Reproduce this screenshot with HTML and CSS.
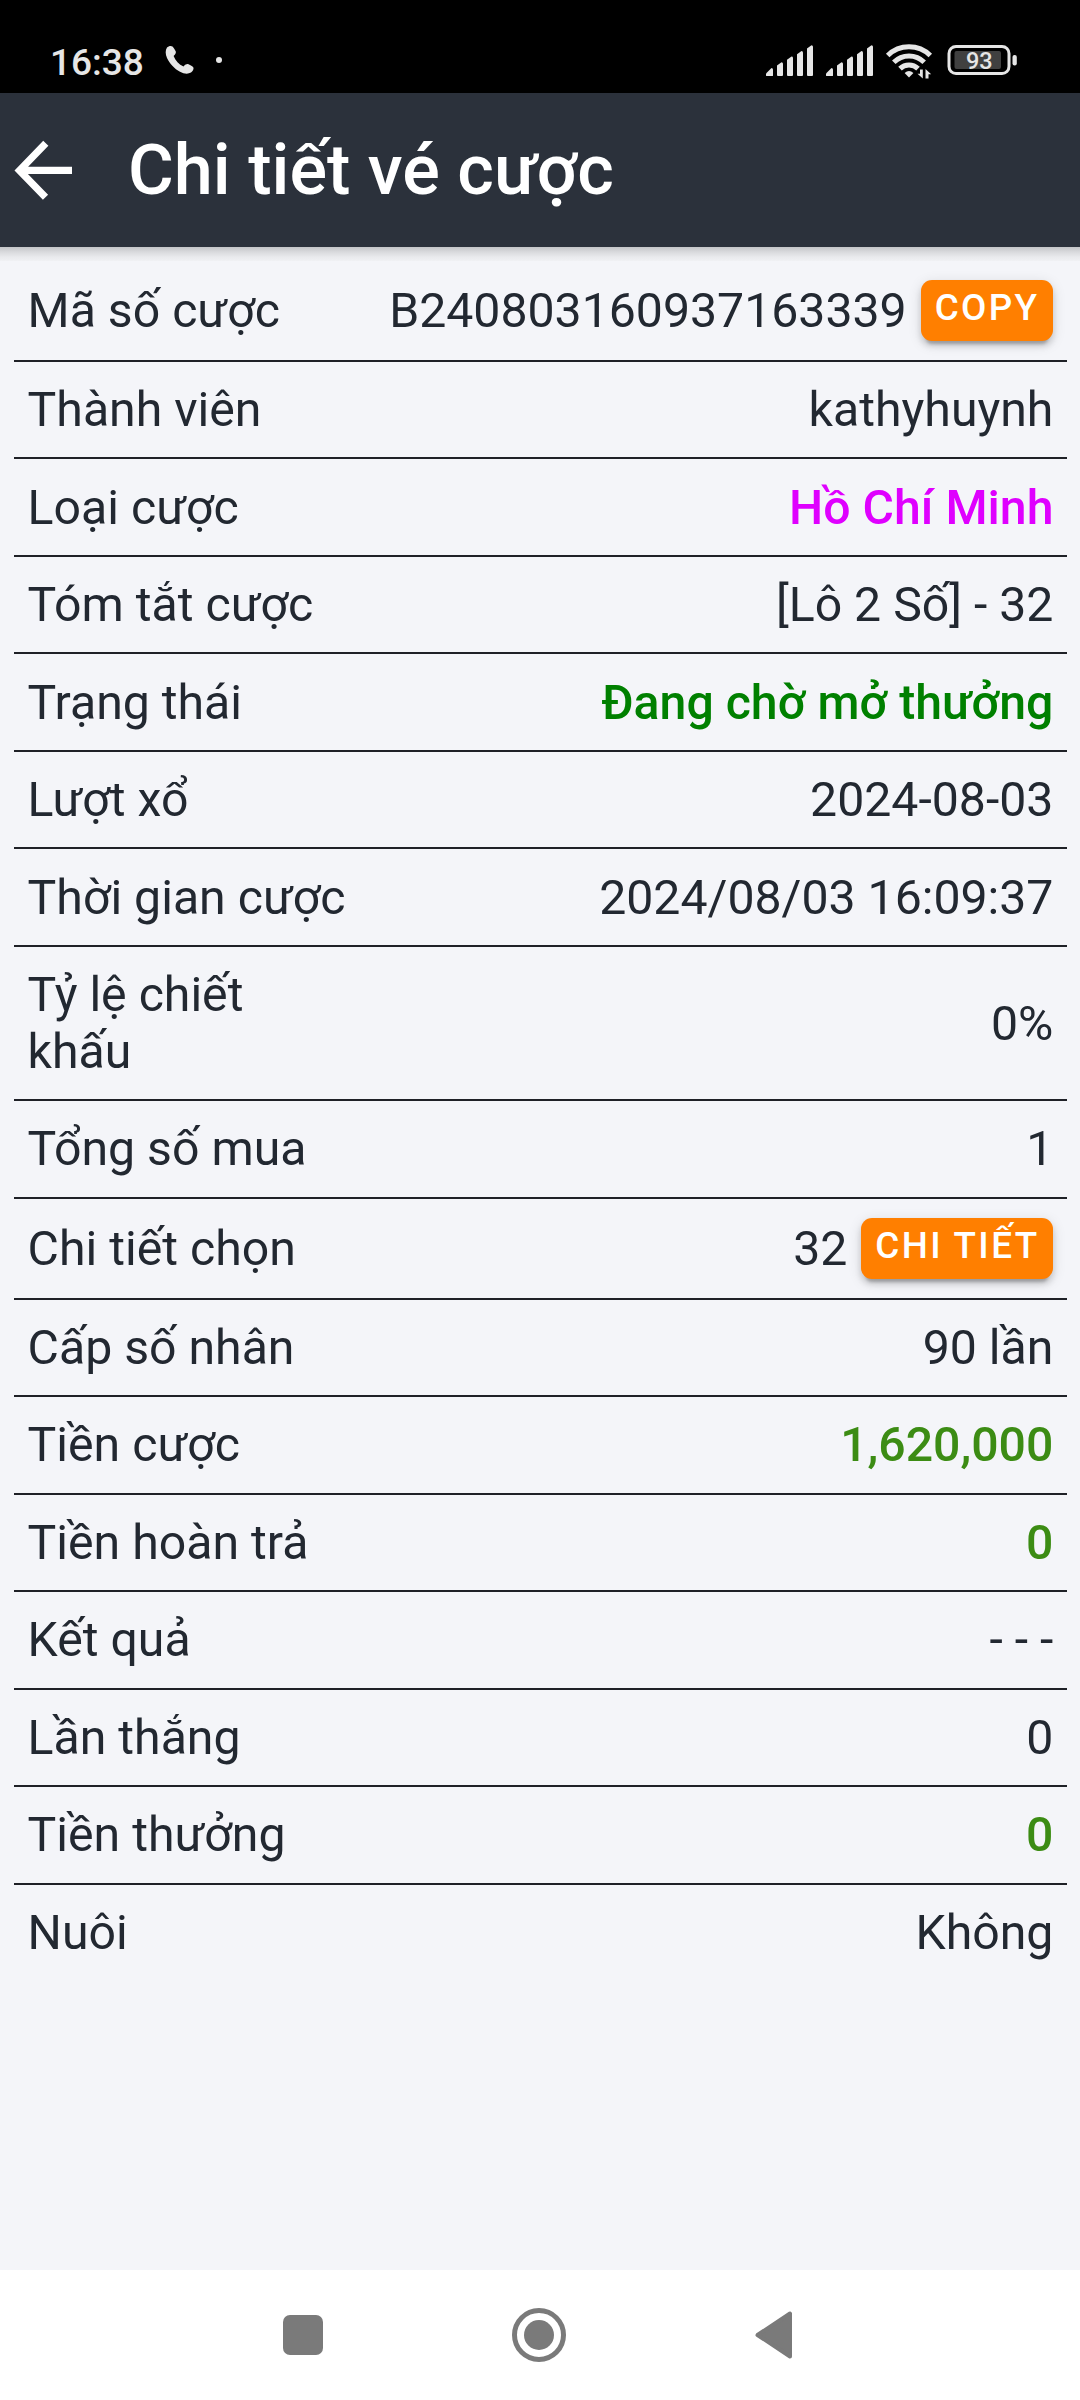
FILE: index.html
```html
<!DOCTYPE html>
<html lang="vi">
<head>
<meta charset="utf-8">
<title>Chi tiết vé cược</title>
<link rel="stylesheet" href="styles.css">
</head>
<body>
<div class="status">
  <span class="clock">16:38</span>
  <svg class="call" width="30" height="30" viewBox="0 0 30 30"><path d="M2 2.5C3.500 1 6 .5 7.500 1.500C9 3 10 5 10.700 6.200C11.300 7.700 10.500 8.900 8.600 11C10.300 15.500 14 19.500 18.500 21.500C20.500 19.500 22 18.700 23.500 19.300C25.500 20 27.500 21.300 28.400 22.500C29.100 24.200 27.500 26.500 26 27.600C23 29.300 19 29 15 26.800C9.500 23.800 4.500 18.600 2 13C.3 9 .2 5 2 2.500Z" fill="#e6e6e6"/></svg>
  <span class="dot"></span>
  <svg class="indicators" width="254" height="40" viewBox="0 0 254 40">
    <defs>
      <g id="signal" fill="#e6e6e6">
        <path d="M0 31.500V29.500L5.500 24Q7 24 7 25.500V31.500Q7 32 6 32H1Q0 32 0 31.500Z"/>
        <path d="M11 31V21.500L15.500 18.300Q17 18.300 17 19.800V31Q17 32 16 32H12Q11 32 11 31Z"/>
        <path d="M21 31V15.800L25.500 12.600Q27 12.600 27 14V31Q27 32 26 32H22Q21 32 21 31Z"/>
        <path d="M31 31V10.200L35.500 7Q37 7 37 8.500V31Q37 32 36 32H32Q31 32 31 31Z"/>
        <path d="M41 31V4.500L45.500 1.300Q47 1.300 47 2.800V31Q47 32 46 32H42Q41 32 41 31Z"/>
      </g>
    </defs>
    <use href="#signal"/>
    <use href="#signal" x="60"/>
    <g fill="none" stroke="#e6e6e6" stroke-width="5">
      <path d="M121.700 11.500A30.500 30.500 0 0 1 164.300 11.500"/>
      <path d="M127.800 18.200A21.500 21.500 0 0 1 158.200 18.200"/>
      <path d="M134 24.600A12.800 12.800 0 0 1 152 24.600"/>
    </g>
    <path d="M143 33.500L138.600 29Q143 24.800 147.400 29Z" fill="#e6e6e6"/>
    <path d="M156.800 25.500V34.500L151.500 29.800H154V25.500ZM159.500 34.500V25L165.200 30.200H162.500V34.500Z" fill="#e6e6e6"/>
    <rect x="183" y="2.500" width="60" height="27" rx="7" fill="none" stroke="#e6e6e6" stroke-width="3"/>
    <rect x="188.500" y="7" width="46.500" height="18" rx="2" fill="#404040"/>
    <rect x="246.500" y="11" width="4.300" height="10.500" rx="2" fill="#e6e6e6"/>
    <text x="200" y="25" class="charge">93</text>
  </svg>
</div>
<header class="bar">
  <svg class="back" width="60" height="60" viewBox="0 0 60 60"><path d="M32.800 3.200L6.500 30.400L32.500 57.200M8 30.400H59" fill="none" stroke="#fff" stroke-width="7.200"/></svg>
  <h1 class="title">Chi tiết vé cược</h1>
</header>
<main class="content">
  <dl class="list">
    <div class="row tall"><dt>Mã số cược</dt><dd>B240803160937163339<button class="btn">COPY</button></dd></div>
    <div class="row"><dt>Thành viên</dt><dd>kathyhuynh</dd></div>
    <div class="row"><dt>Loại cược</dt><dd class="game">Hồ Chí Minh</dd></div>
    <div class="row"><dt>Tóm tắt cược</dt><dd>[Lô 2 Số] - 32</dd></div>
    <div class="row"><dt>Trạng thái</dt><dd class="pending">Đang chờ mở thưởng</dd></div>
    <div class="row"><dt>Lượt xổ</dt><dd>2024-08-03</dd></div>
    <div class="row"><dt>Thời gian cược</dt><dd>2024/08/03 16:09:37</dd></div>
    <div class="row double"><dt>Tỷ lệ chiết khấu</dt><dd>0%</dd></div>
    <div class="row"><dt>Tổng số mua</dt><dd>1</dd></div>
    <div class="row tall"><dt>Chi tiết chọn</dt><dd>32<button class="btn">CHI TIẾT</button></dd></div>
    <div class="row"><dt>Cấp số nhân</dt><dd>90 lần</dd></div>
    <div class="row"><dt>Tiền cược</dt><dd class="money">1,620,000</dd></div>
    <div class="row"><dt>Tiền hoàn trả</dt><dd class="money">0</dd></div>
    <div class="row"><dt>Kết quả</dt><dd>- - -</dd></div>
    <div class="row"><dt>Lần thắng</dt><dd>0</dd></div>
    <div class="row"><dt>Tiền thưởng</dt><dd class="money">0</dd></div>
    <div class="row"><dt>Nuôi</dt><dd>Không</dd></div>
  </dl>
</main>
<nav class="nav">
  <svg width="40" height="40" viewBox="0 0 40 40"><rect width="40" height="40" rx="7" fill="#7a7a7a"/></svg>
  <svg width="54" height="54" viewBox="0 0 54 54"><circle cx="27" cy="27" r="24.500" fill="none" stroke="#7a7a7a" stroke-width="5"/><circle cx="27" cy="27" r="15" fill="#7a7a7a"/></svg>
  <svg width="40" height="50" viewBox="0 0 40 50"><path d="M2.500 25L35 3.500V46.500Z" fill="#7a7a7a" stroke="#7a7a7a" stroke-width="4" stroke-linejoin="round"/></svg>
</nav>
</body>
</html>
```

FILE: styles.css
```css
* {
  box-sizing: border-box;
}

body {
  margin: 0;
  height: 2400px;
  display: flex;
  flex-direction: column;
  background: #f4f5f9;
  color: #222831;
  font-family: Roboto, "Noto Sans", sans-serif;
  font-size: 48.2px;
  line-height: 56.6px;
}

.status {
  display: flex;
  align-items: flex-start;
  height: 93px;
  padding: 0 60px 0 50px;
  background: #000;
}

.clock {
  width: 115px;
  padding-top: 41px;
  color: #e6e6e6;
  font-size: 37px;
  font-weight: 500;
  line-height: 44px;
}

.call {
  margin-top: 45px;
}

.dot {
  width: 6px;
  height: 6px;
  margin: 57px 0 0 21px;
  border-radius: 50%;
  background: #e6e6e6;
}

.indicators {
  margin: 44px 0 0 auto;
}

.charge {
  fill: #e6e6e6;
  font-size: 23.5px;
  font-weight: 500;
}

.bar {
  display: flex;
  align-items: center;
  height: 154px;
  padding-left: 13px;
  background: #2b313b;
}

.title {
  margin: 0 0 0 55px;
  color: #fff;
  font-size: 70.2px;
  font-weight: 500;
  line-height: 80px;
}

.content {
  flex: 1;
  padding: 13.75px 13px 0 14px;
  background: linear-gradient(#c4c5c8, #d9dadd 5px, #e9eaed 10px, #f0f1f4 14px, #f4f5f9 14px) no-repeat;
}

.list {
  margin: 0;
}

.row {
  display: flex;
  align-items: center;
  height: 97.5px;
  padding: 0 13.6px;
  border-bottom: 2px solid #1f2127;
}

.row:last-child {
  border-bottom-color: transparent;
}

.tall {
  height: 101px;
}

.double {
  height: 154.250px;
}

dt {
  width: 323px;
  padding-top: 2px;
}

dd {
  display: flex;
  flex: 1;
  align-items: center;
  justify-content: flex-end;
  gap: 14px;
  margin: 0;
  padding-top: 2px;
  white-space: nowrap;
}

.game {
  color: #df00ff;
  font-weight: 500;
}

.pending {
  color: #008000;
  font-weight: 500;
}

.money {
  color: #3c8c14;
  font-weight: 500;
}

.btn {
  height: 61px;
  margin-top: -2px;
  padding: 0 14px 4px;
  border: 0;
  border-radius: 11px;
  background: #ff7f00;
  box-shadow: 0 8px 3px -5px rgba(0, 0, 0, .2), 0 5px 6px rgba(0, 0, 0, .14), 0 3px 14px rgba(0, 0, 0, .12);
  color: #fff;
  font: 500 36.800px/56px Roboto, sans-serif;
  letter-spacing: 2.350px;
}

.nav {
  display: grid;
  grid-template-columns: 236px 236px 236px;
  align-items: center;
  justify-content: center;
  justify-items: center;
  height: 130px;
  padding-right: 3px;
  background: #fff;
}
```
